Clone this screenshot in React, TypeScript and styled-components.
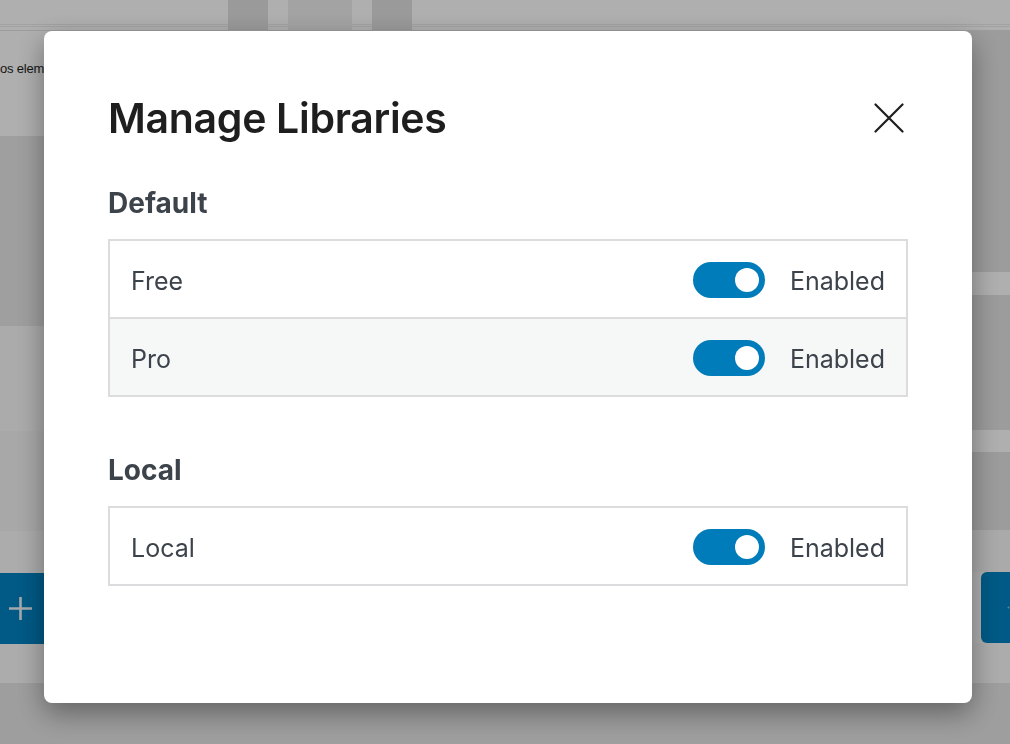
import styled, {createGlobalStyle} from "styled-components";

const GlobalStyle = createGlobalStyle`
    html, body {
        margin: 0;
        padding: 0;
        width: 100%;
        height: 100%;
        overflow: hidden;
    }

    body {
        font-family: Inter, "Noto Sans", "Liberation Sans", sans-serif;
        background: #ffffff;
    }

    #root {
        height: 100%;
    }
`

// ---- page behind the dialog ----

const Page = styled.div`
    position: relative;
    width: 1010px;
    height: 744px;
    display: flex;
    flex-direction: column;
    background: #ffffff;
    overflow: hidden;
`

const TopBar = styled.div`
    height: 30px;
    flex-shrink: 0;
    display: flex;
    gap: 20px;
    padding-left: 228px;
    border-bottom: 1px solid #e4e4e4;
    background: linear-gradient(
        to bottom,
        transparent 24px,
        #ececec 24px, #ececec 25px,
        transparent 25px, transparent 26px,
        #ececec 26px, #ececec 27px,
        transparent 27px
    );
`

const Tab = styled.div<{ $w: number, $tone: string }>`
    width: ${p => p.$w}px;
    height: 100%;
    background: ${p => p.$tone};
`

const Workspace = styled.div`
    flex: 1;
    display: flex;
    min-height: 0;
`

const SidePane = styled.div<{ $w: number }>`
    width: ${p => p.$w}px;
    flex-shrink: 0;
    display: flex;
    flex-direction: column;
`

const Canvas = styled.div`
    flex: 1;
`

const Band = styled.div<{ $h: number, $tone: string }>`
    height: ${p => p.$h}px;
    flex-shrink: 0;
    background: ${p => p.$tone};
`

const IntroText = styled.div`
    height: 105px;
    flex-shrink: 0;
    padding-top: 30px;
    box-sizing: border-box;
    font-family: "Liberation Sans", Arial, sans-serif;
    font-size: 13px;
    letter-spacing: -0.2px;
    color: #1e1e1e;
    white-space: nowrap;
`

const AddButton = styled.div<{ $side: "left" | "right" }>`
    height: 71px;
    flex-shrink: 0;
    background: #0083c2;
    display: flex;
    align-items: center;
    padding-left: ${p => p.$side === "left" ? "8px" : "26px"};
    margin-left: ${p => p.$side === "right" ? "31px" : "0"};
    border-radius: ${p => p.$side === "right" ? "6px 0 0 6px" : "0"};
`

const Footer = styled.div`
    height: 61px;
    flex-shrink: 0;
    background: #e6e6e6;
`

// ---- dialog ----

const Overlay = styled.div`
    position: fixed;
    inset: 0;
    background: rgba(0, 0, 0, 0.314);
    display: flex;
    align-items: flex-start;
    padding: 31px 0 0 44px;
`

const Modal = styled.div`
    width: 928px;
    height: 672px;
    box-sizing: border-box;
    background: #ffffff;
    border-radius: 8px;
    box-shadow: 0 10px 28px rgba(0, 0, 0, 0.38);
    padding: 62px 64px 0 64px;
    display: flex;
    flex-direction: column;
`

const Header = styled.div`
    display: flex;
    align-items: center;
    justify-content: space-between;
    margin-bottom: 43px;
`

const Title = styled.h1`
    margin: 0;
    font-size: 41px;
    line-height: 50px;
    font-weight: 600;
    letter-spacing: -0.3px;
    color: #1e1e1e;
`

const CloseButton = styled.button`
    width: 32px;
    height: 32px;
    margin-right: 3px;
    padding: 0;
    border: none;
    background: transparent;
    display: flex;
    align-items: center;
    justify-content: center;
    cursor: pointer;
`

const SectionTitle = styled.h2`
    margin: 0 0 19px 0;
    font-size: 28px;
    line-height: 34px;
    font-weight: 700;
    color: #3c434a;
`

const Table = styled.div`
    border: 2px solid #dcdcde;
    display: flex;
    flex-direction: column;
    margin-bottom: 56px;
`

const Row = styled.div<{ $alt?: boolean }>`
    height: 76px;
    display: flex;
    align-items: center;
    padding: 0 21px 0 21px;
    background: ${p => p.$alt ? "#f6f7f7" : "#ffffff"};

    & + & {
        border-top: 2px solid #dcdcde;
    }
`

const RowLabel = styled.span`
    flex: 1;
    padding-top: 3px;
    font-size: 25px;
    color: #3c434a;
`

const Toggle = styled.span`
    position: relative;
    width: 72px;
    height: 36px;
    margin-top: 1px;
    border-radius: 18px;
    background: #007cba;
    margin-right: 25px;
`

const Knob = styled.span`
    position: absolute;
    right: 6px;
    top: 6px;
    width: 24px;
    height: 24px;
    border-radius: 50%;
    background: #ffffff;
`

const Status = styled.span`
    padding-top: 3px;
    font-size: 25px;
    color: #3c434a;
`

type Library = { name: string }

const sections: { title: string, items: Library[] }[] = [
    {title: "Default", items: [{name: "Free"}, {name: "Pro"}]},
    {title: "Local", items: [{name: "Local"}]},
]

const CloseIcon = () => (
    <svg width="30" height="30" viewBox="0 0 30 30" fill="none">
        <path d="M1.5 1.5 L28.5 28.5 M28.5 1.5 L1.5 28.5" stroke="#1e1e1e" strokeWidth="2.2" strokeLinecap="round"/>
    </svg>
)

const PlusIcon = () => (
    <svg width="25" height="25" viewBox="0 0 25 25" fill="none">
        <path d="M12.5 1 V24 M1 12.5 H24" stroke="#f2f6fa" strokeWidth="2.6"/>
    </svg>
)

export default function App() {
    return <>
        <GlobalStyle/>
        <Page>
            <TopBar>
                <Tab $w={40} $tone="#e0e0e0"/>
                <Tab $w={64} $tone="#eeeeee"/>
                <Tab $w={40} $tone="#e0e0e0"/>
            </TopBar>
            <Workspace>
                <SidePane $w={250}>
                    <IntroText>os elementos da biblioteca</IntroText>
                    <Band $h={190} $tone="#e8e8e8"/>
                    <Band $h={105} $tone="#f9f9f9"/>
                    <Band $h={100} $tone="#f5f5f5"/>
                    <Band $h={42} $tone="#fbfbfb"/>
                    <AddButton $side="left"><PlusIcon/></AddButton>
                    <Band $h={40} $tone="#fbfbfb"/>
                </SidePane>
                <Canvas/>
                <SidePane $w={60}>
                    <Band $h={241} $tone="#e3e3e3"/>
                    <Band $h={23} $tone="#ffffff"/>
                    <Band $h={135} $tone="#e3e3e3"/>
                    <Band $h={22} $tone="#ffffff"/>
                    <Band $h={78} $tone="#e3e3e3"/>
                    <Band $h={42} $tone="#f8f8f8"/>
                    <AddButton $side="right"><PlusIcon/></AddButton>
                    <Band $h={40} $tone="#fbfbfb"/>
                </SidePane>
            </Workspace>
            <Footer/>
        </Page>
        <Overlay>
            <Modal role="dialog">
                <Header>
                    <Title>Manage Libraries</Title>
                    <CloseButton aria-label="Close"><CloseIcon/></CloseButton>
                </Header>
                {sections.map(s => (
                    <div key={s.title}>
                        <SectionTitle>{s.title}</SectionTitle>
                        <Table>
                            {s.items.map((item, i) => (
                                <Row key={item.name} $alt={i % 2 === 1}>
                                    <RowLabel>{item.name}</RowLabel>
                                    <Toggle><Knob/></Toggle>
                                    <Status>Enabled</Status>
                                </Row>
                            ))}
                        </Table>
                    </div>
                ))}
            </Modal>
        </Overlay>
    </>
}
